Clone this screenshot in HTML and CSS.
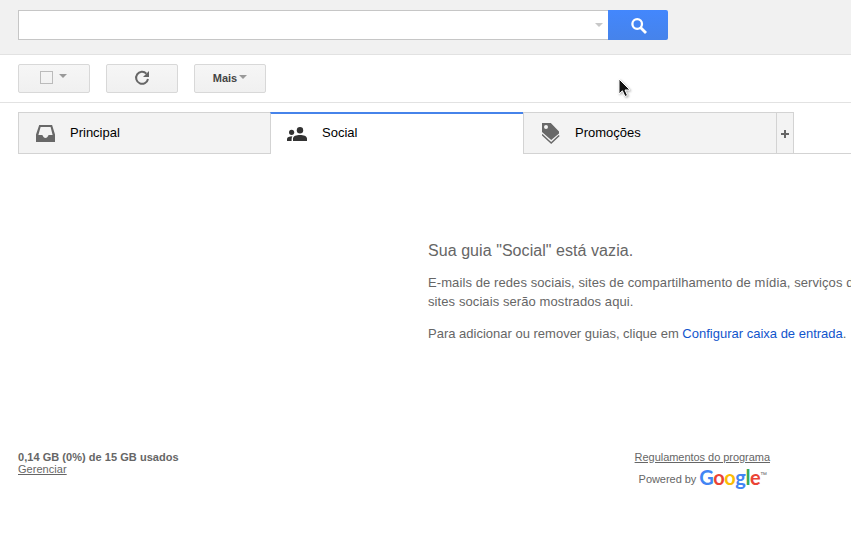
FILE: index.html
```html
<!DOCTYPE html>
<html lang="pt-BR">
<head>
<meta charset="utf-8">
<title>Social</title>
<link rel="stylesheet" href="styles.css">
</head>
<body>
<header class="header">
  <div class="search-box"><span class="caret caret-light"></span></div>
  <button class="search-button" aria-label="Pesquisar">
    <svg width="16" height="16" viewBox="0 0 16 16" fill="none" stroke="#fff"><circle cx="6.2" cy="6" r="4.8" stroke-width="2.3"/><path d="M9.5 9.5L15 15" stroke-width="2.8"/></svg>
  </button>
</header>
<div class="toolbar">
  <button class="tool select"><span class="checkbox"></span><span class="caret"></span></button>
  <button class="tool refresh" aria-label="Atualizar">
    <svg width="16" height="16" viewBox="0 0 16 16"><path d="M12.4 3.6A6 6 0 1 0 14 9" fill="none" stroke="#666" stroke-width="2"/><path d="M15 1v6H9z" fill="#666"/></svg>
  </button>
  <button class="tool more">Mais<span class="caret"></span></button>
</div>
<nav class="tabs">
  <div class="tab first">
    <svg class="icon" width="20" height="18" viewBox="0 0 20 18"><path fill="#686868" fill-rule="evenodd" d="M3.2 0h12.9L19 9.5V17H0V9.5zM4.6 2L2.4 10h3.8c.8 0 .8 3 3.3 3s2.5-3 3.3-3h3.8L14.6 2z"/></svg>
    <span>Principal</span>
  </div>
  <div class="tab active">
    <svg class="icon" width="21" height="15" viewBox="0 0 21 15" fill="#333"><circle cx="13" cy="3.2" r="3.2"/><circle cx="4.6" cy="5.3" r="2.6"/><path d="M6 14v-2.500C6 9 9.500 8 13 8s7 1 7 3.500V14zM0 14v-2c0-1.800 2.300-2.700 5.500-2.700C4.900 10 4.600 11 4.600 14z"/></svg>
    <span>Social</span>
  </div>
  <div class="tab promo">
    <svg class="icon" width="19" height="22" viewBox="0 0 19 22"><path fill="#686868" fill-rule="evenodd" d="M0 0h8.800L17 8.500v2L9.200 17 0 9zM4 2a2 2 0 1 0 0 4 2 2 0 0 0 0-4z"/><path d="M0 11.500L9.200 20 17.200 12.500" fill="none" stroke="#686868" stroke-width="1.500"/></svg>
    <span>Promoções</span>
  </div>
  <div class="add"><svg width="8" height="8" viewBox="0 0 8 8"><path d="M3 0h2v3h3v2H5v3H3V5H0V3h3z" fill="#666"/></svg></div>
</nav>
<main class="empty">
  <h1>Sua guia "Social" está vazia.</h1>
  <p class="description">E-mails de redes sociais, sites de compartilhamento de mídia, serviços de<br>sites sociais serão mostrados aqui.</p>
  <p>Para adicionar ou remover guias, clique em <a href="#">Configurar caixa de entrada</a>.</p>
</main>
<footer class="footer">
  <div class="usage"><b>0,14 GB (0%) de 15 GB usados</b><a href="#">Gerenciar</a></div>
  <div class="legal">
    <a href="#">Regulamentos do programa</a>
    <div class="powered">Powered by <span class="logo"><span class="blue">G</span><span class="red">o</span><span class="yellow">o</span><span class="blue">g</span><span class="green">l</span><span class="red">e</span></span><span class="tm">™</span></div>
  </div>
</footer>
<svg class="cursor" width="13" height="20" viewBox="0 0 13 20"><path d="M1 1v15l3.400-3.200L7 18.500l2.500-1.100L7 12h5z" fill="#111" stroke="#fff"/></svg>
</body>
</html>
```

FILE: styles.css
```css
* { box-sizing: border-box; }
html, body { overflow: hidden; }
body { margin: 0; height: 548px; position: relative; background: #fff; color: #666; font: 13px "Liberation Sans", Arial, sans-serif; }
button { padding: 0; margin: 0; font: inherit; }
.header { display: flex; height: 55px; padding: 10px 18px 0; background: #f1f1f1; border-bottom: 1px solid #e2e2e2; }
.search-box { display: flex; align-items: center; justify-content: flex-end; width: 590px; height: 30px; padding-right: 5px; background: #fff; border: 1px solid #c6c6c6; border-right: 0; }
.search-button { display: flex; align-items: center; justify-content: center; width: 60px; height: 30px; border: 0; border-radius: 0 2px 2px 0; background: linear-gradient(#4387fd, #4683ea); }
.search-button svg { margin: 1px 0 0 1px; }
.caret { width: 0; height: 0; border: 4px solid transparent; border-top-color: #999; border-bottom: 0; }
.caret-light { border-top-color: #c8c8c8; }
.toolbar { display: flex; gap: 16px; height: 48px; padding: 9px 18px 0; border-bottom: 1px solid #e2e2e2; }
.tool { display: flex; align-items: center; justify-content: center; width: 72px; height: 29px; border: 1px solid #d8d8d8; border-radius: 2px; background: linear-gradient(#f6f6f6, #f0f0f0); color: #444; }
.select { gap: 6px; padding: 0 1px 3px 0; }
.refresh { padding-bottom: 2px; }
.checkbox { width: 13px; height: 13px; border: 1px solid #bbb; margin-top: 1px; }
.more { gap: 2px; font-size: 11px; font-weight: bold; padding-bottom: 1px; }
.more .caret, .select .caret { margin-top: -2px; }
.tabs { display: flex; height: 51px; padding: 9px 0 0 18px; color: #000; }
.tabs::after { content: ""; flex: 1; border-bottom: 1px solid #d3d3d3; }
.tab { display: flex; align-items: center; width: 253px; height: 42px; padding: 0 0 1px 16px; background: #f3f3f3; border: 1px solid #d3d3d3; }
.tab .icon { flex: none; margin-top: 2px; }
.first { width: 252px; border-right: 0; padding-left: 17px; }
.first .icon { margin-right: 14px; }
.active { width: 254px; background: #fff; border-top: 2px solid #4683ea; border-right: 0; border-bottom: 0; padding: 0 0 3px 16px; }
.active .icon { margin: 4px 14px 0 0; }
.promo { width: 253px; margin-left: -1px; border-right: 0; padding-left: 18px; }
.promo .icon { margin: 3px 14px 0 0; }
.add { display: flex; align-items: center; justify-content: center; width: 18px; border: 1px solid #d3d3d3; background: #f3f3f3; padding-top: 2px; }
.empty { height: 295px; padding: 87px 0 0 428px; white-space: nowrap; }
h1 { margin: 0 0 12px; font-size: 16px; line-height: 20px; font-weight: normal; letter-spacing: .06px; }
.empty p { margin: 0 0 13px; line-height: 19px; }
.empty .description { letter-spacing: .09px; }
.empty a { color: #15c; text-decoration: none; }
.footer { display: flex; justify-content: space-between; width: 788px; padding: 2px 18px 0; font-size: 11px; line-height: 12px; }
.footer a { color: #666; text-decoration: underline; }
.usage { display: flex; flex-direction: column; letter-spacing: .04px; }
.legal { letter-spacing: -.04px; }
.powered { display: flex; align-items: center; height: 24px; margin: 4px 0 0 4px; white-space: pre; }
.logo { display: flex; margin-top: -5px; font: bold 20px/20px Lato, sans-serif; letter-spacing: -.5px; }
.blue { color: #4285f4; } .red { color: #ea4335; } .yellow { color: #fbbc05; } .green { color: #34a853; }
.tm { font-size: 7px; margin-top: -8px; }
.cursor { position: absolute; left: 618px; top: 78px; filter: drop-shadow(1px 1px 1px #0005); }
```
